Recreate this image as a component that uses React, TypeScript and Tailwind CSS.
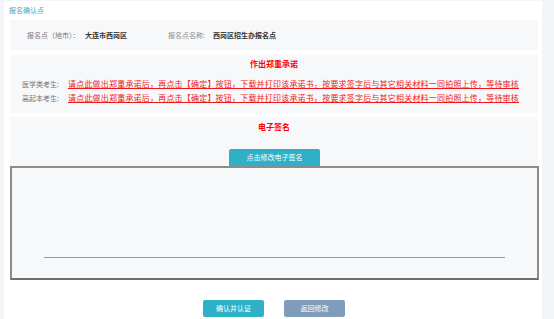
import React from "react";

const font = { fontFamily: '"Noto Sans CJK SC", "Noto Sans", sans-serif' };

export default function App() {
  const linkText =
    "请点此做出郑重承诺后，再点击【确定】按钮，下载并打印该承诺书，按要求签字后与其它相关材料一同拍照上传，等待审核";
  return (
    <div
      className="w-[554px] h-[319px] bg-[#f4f5f6] overflow-hidden flex"
      style={font}
    >
      <div className="ml-[4px] mt-[1px] w-[538px] bg-white pl-[6px] pr-[4px] flex flex-col">
        <div className="h-[19px] flex items-center text-[7px] text-[#3aa6c3] -ml-[1px]">
          报名确认点
        </div>
        <div className="h-[30px] bg-[#f7f8fa] flex items-center text-[7px]">
          <span className="ml-[17px] w-[58px] text-[#777]">报名点（地市）：</span>
          <span className="w-[83px] font-bold text-[#333]">大连市西岗区</span>
          <span className="w-[45px] text-[#888]">报名点名称:</span>
          <span className="font-bold text-[#333]">西岗区招生办报名点</span>
        </div>
        <div className="mt-[5px] h-[58px] bg-[#f7f8fa] flex flex-col">
          <div className="mt-[4px] h-[10px] flex items-center justify-center text-[8px] font-bold text-[#f00]">
            作出郑重承诺
          </div>
          <div className="mt-[9px] flex items-center h-[12px]">
            <span className="ml-[12px] w-[46px] text-[7px] text-[#777]">医学类考生:</span>
            <span className="text-[8px] leading-[12px] tracking-[0.2px] text-[#f01818] underline decoration-[#f01818] whitespace-nowrap">
              {linkText}
            </span>
          </div>
          <div className="mt-[2px] flex items-center h-[12px]">
            <span className="ml-[12px] w-[46px] text-[7px] text-[#777]">高起本考生:</span>
            <span className="text-[8px] leading-[12px] tracking-[0.2px] text-[#f01818] underline decoration-[#f01818] whitespace-nowrap">
              {linkText}
            </span>
          </div>
        </div>
        <div className="mt-[4px] bg-[#f7f8fa] flex flex-col">
          <div className="mt-[5px] h-[10px] flex items-center justify-center text-[8px] font-bold text-[#f00]">
            电子签名
          </div>
          <div className="mt-[17px] flex justify-center">
            <div className="ml-[1px] w-[91px] h-[17px] bg-[#2fb0c6] rounded-t-[2px] flex items-center justify-center text-[7px] text-white">
              点击修改电子签名
            </div>
          </div>
          <div className="w-[529px] h-[114px] border-2 border-[#8c8c8c] border-b-[#6e6e6e] bg-[#f7f8fa] flex flex-col">
            <div className="ml-[32px] mt-[89px] w-[461px] h-px bg-[#999]" />
          </div>
        </div>
        <div className="mt-[20px] flex justify-center gap-[20px]">
          <div className="w-[61px] h-[17px] bg-[#2fb0c6] rounded-[2px] flex items-center justify-center text-[7px] text-white">
            确认并认证
          </div>
          <div className="w-[61px] h-[17px] bg-[#7f9cba] rounded-[2px] flex items-center justify-center text-[7px] text-white">
            返回修改
          </div>
        </div>
      </div>
    </div>
  );
}
